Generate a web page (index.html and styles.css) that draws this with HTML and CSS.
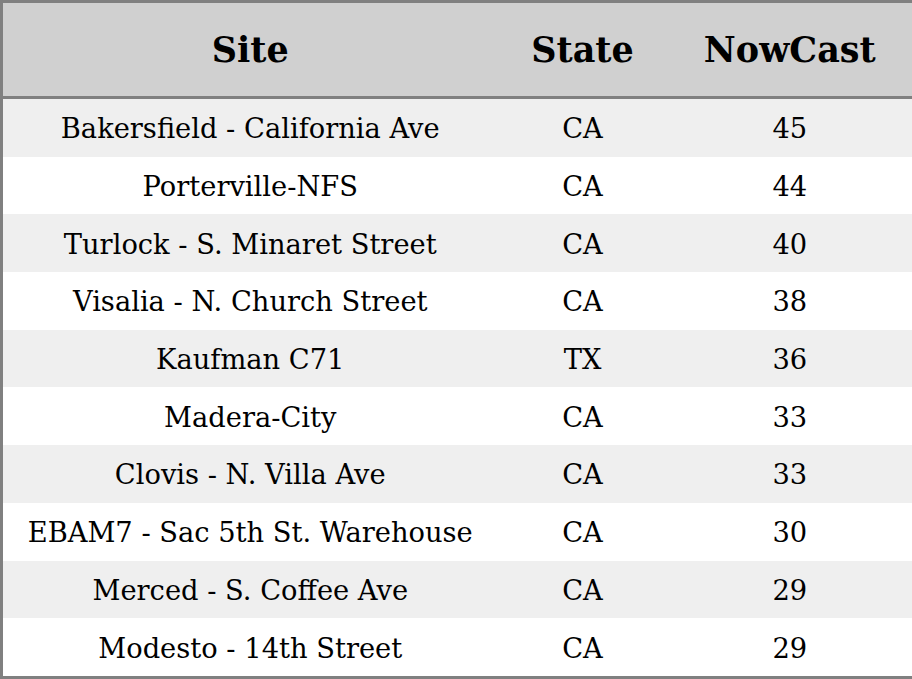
FILE: index.html
```html
<!DOCTYPE html>
<html>
<head>
<meta charset="utf-8">
<link rel="stylesheet" href="styles.css">
</head>
<body>
<table class="aq">
<colgroup><col class="c-site"><col class="c-state"><col class="c-now"></colgroup>
<thead>
<tr><th>Site</th><th>State</th><th>NowCast</th></tr>
</thead>
<tbody>
<tr><td>Bakersfield - California Ave</td><td>CA</td><td>45</td></tr>
<tr><td>Porterville-NFS</td><td>CA</td><td>44</td></tr>
<tr><td>Turlock - S. Minaret Street</td><td>CA</td><td>40</td></tr>
<tr><td>Visalia - N. Church Street</td><td>CA</td><td>38</td></tr>
<tr><td>Kaufman C71</td><td>TX</td><td>36</td></tr>
<tr><td>Madera-City</td><td>CA</td><td>33</td></tr>
<tr><td>Clovis - N. Villa Ave</td><td>CA</td><td>33</td></tr>
<tr><td>EBAM7 - Sac 5th St. Warehouse</td><td>CA</td><td>30</td></tr>
<tr><td>Merced - S. Coffee Ave</td><td>CA</td><td>29</td></tr>
<tr><td>Modesto - 14th Street</td><td>CA</td><td>29</td></tr>
</tbody>
</table>
</body>
</html>
```
FILE: styles.css
```css
html, body {
  margin: 0;
  padding: 0;
  background: #ffffff;
}
.aq {
  width: 912px;
  height: 679px;
  border-collapse: collapse;
  border: 3px solid #808080;
  font-family: "DejaVu Serif", serif;
  color: #000;
  table-layout: fixed;
}
.c-site { width: 496px; }
.c-state { width: 170px; }
.c-now { width: 246px; }
.aq th {
  background: #d0d0d0;
  font-size: 35px;
  font-weight: bold;
  height: 93px;
  padding: 0;
  text-align: center;
  border-bottom: 3px solid #808080;
}
.aq td {
  font-size: 27.3px;
  text-align: center;
  padding: 2px 0 0 0;
  height: 55.7px;
}
.aq tbody tr:nth-child(odd) td {
  background: #efefef;
}
.aq tbody tr:nth-child(even) td {
  background: #ffffff;
}
```
